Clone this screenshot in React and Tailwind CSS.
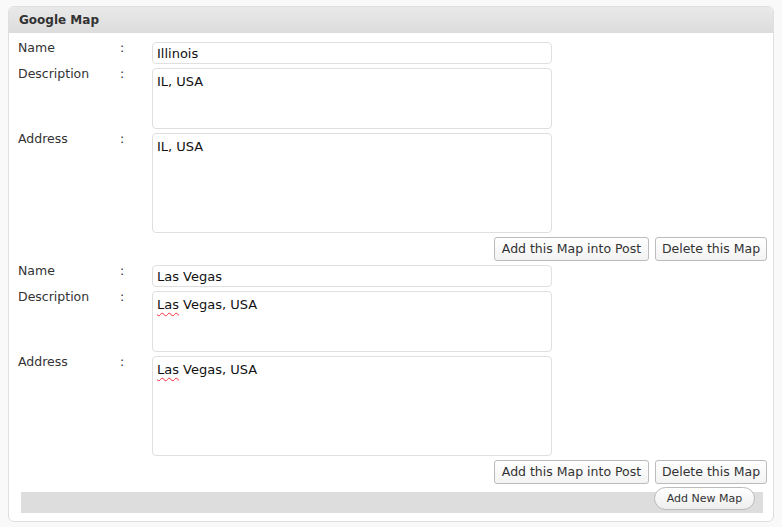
import React from 'react';

const maps = [
  { name: 'Illinois', description: 'IL, USA', address: 'IL, USA', spell: false },
  { name: 'Las Vegas', description: 'Las Vegas, USA', address: 'Las Vegas, USA', spell: true },
];

function Label({ children }) {
  return (
    <>
      <div className="w-[102px] shrink-0 -mt-[2px] text-[12.5px] leading-4 text-[#333]">{children}</div>
      <div className="w-[32px] shrink-0 -mt-[2px] text-[12.5px] leading-4 text-[#333]">:</div>
    </>
  );
}

function Value({ text, spell }) {
  if (!spell) return text;
  const [first, ...rest] = text.split(' ');
  return (
    <>
      <span className="underline decoration-wavy decoration-red-500 decoration-1 underline-offset-[3px]">{first}</span>
      {' ' + rest.join(' ')}
    </>
  );
}

function Btn({ children, w }) {
  return (
    <button className={`${w} h-[24px] rounded-[3px] border border-[#bbbbbb] bg-gradient-to-b from-white to-[#f3f3f3] text-[12.5px] leading-4 text-[#333]`}>
      {children}
    </button>
  );
}

function MapBlock({ m }) {
  return (
    <div className="flex flex-col gap-1">
      <div className="flex items-start">
        <Label>Name</Label>
        <div className="w-[400px] h-[22px] rounded-[4px] border border-[#dfdfdf] bg-white px-[4px] pt-[3px] text-[13px] leading-4 text-[#111]">
          {m.name}
        </div>
      </div>
      <div className="flex items-start">
        <Label>Description</Label>
        <div className="w-[400px] h-[61px] rounded-[4px] border border-[#dfdfdf] bg-white px-[4px] pt-[5px] text-[13px] leading-4 text-[#111]">
          <Value text={m.description} spell={m.spell} />
        </div>
      </div>
      <div className="flex items-start">
        <Label>Address</Label>
        <div className="w-[400px] h-[100px] rounded-[4px] border border-[#dfdfdf] bg-white px-[4px] pt-[5px] text-[13px] leading-4 text-[#111]">
          <Value text={m.address} spell={m.spell} />
        </div>
      </div>
      <div className="flex justify-end gap-[6px]">
        <Btn w="w-[155px]">Add this Map into Post</Btn>
        <Btn w="w-[112px]">Delete this Map</Btn>
      </div>
    </div>
  );
}

export default function App() {
  return (
    <div className="w-[782px] h-[527px] bg-[#f9f9f9] pt-[6px] pl-[8px]" style={{ fontFamily: '"DejaVu Sans", Verdana, sans-serif' }}>
      <div className="w-[766px] h-[516px] rounded-[6px] border border-[#dfdfdf] bg-white overflow-hidden flex flex-col">
        <div className="h-[26px] shrink-0 flex items-center pl-[10px] bg-gradient-to-b from-[#e9e9e9] to-[#dcdcdc]">
          <span className="text-[12px] font-bold text-[#333]">Google Map</span>
        </div>
        <div className="pl-[9px] pr-[6px] pt-[9px] flex flex-col gap-1">
          {maps.map((m) => (
            <MapBlock key={m.name} m={m} />
          ))}
          <div className="relative mt-[4px] ml-[3px] mr-[4px] h-[21px] bg-[#dddddd]">
            <button className="absolute -top-[5px] right-[8px] w-[101px] h-[23px] rounded-full border border-[#bbbbbb] bg-gradient-to-b from-white to-[#eeeeee] text-[11px] leading-4 text-[#333]">
              Add New Map
            </button>
          </div>
        </div>
      </div>
    </div>
  );
}
